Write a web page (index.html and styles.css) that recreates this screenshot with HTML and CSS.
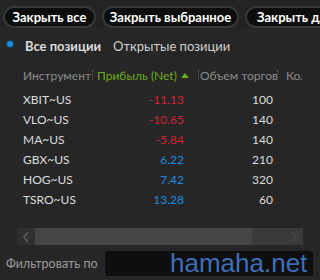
FILE: index.html
```html
<!DOCTYPE html>
<html>
<head>
<meta charset="utf-8">
<link rel="stylesheet" href="styles.css">
</head>
<body>
<div class="app">
  <div class="toolbar">
    <button class="btn b1">Закрыть все</button>
    <button class="btn b2">Закрыть выбранное</button>
    <button class="btn b3">Закрыть для</button>
  </div>
  <div class="tabs">
    <span class="radio"></span>
    <span class="tab active">Все позиции</span>
    <span class="tab">Открытые позиции</span>
  </div>
  <div class="table">
    <div class="row head">
      <span class="c1">Инструмент</span><span class="sep"></span>
      <span class="c2 sorted">Прибыль (Net) <span class="tri"></span></span><span class="sep"></span>
      <span class="c3">Объем торгов</span><span class="sep"></span>
      <span class="c4">Кол</span>
    </div>
    <div class="row"><span class="c1">XBIT~US</span><span class="c2 neg">-11.13</span><span class="c3">100</span></div>
    <div class="row"><span class="c1">VLO~US</span><span class="c2 neg">-10.65</span><span class="c3">140</span></div>
    <div class="row"><span class="c1">MA~US</span><span class="c2 neg">-5.84</span><span class="c3">140</span></div>
    <div class="row"><span class="c1">GBX~US</span><span class="c2 pos">6.22</span><span class="c3">210</span></div>
    <div class="row"><span class="c1">HOG~US</span><span class="c2 pos">7.42</span><span class="c3">320</span></div>
    <div class="row"><span class="c1">TSRO~US</span><span class="c2 pos">13.28</span><span class="c3">60</span></div>
  </div>
  <div class="scroll">
    <span class="arrow left"><svg width="8" height="12" viewBox="0 0 8 12"><path d="M6 1 L2 6 L6 11" fill="none" stroke="#555" stroke-width="2"/></svg></span>
    <span class="thumb"></span>
    <span class="track"></span>
    <span class="arrow right"><svg width="8" height="12" viewBox="0 0 8 12"><path d="M2 1 L6 6 L2 11" fill="none" stroke="#444" stroke-width="2"/></svg></span>
  </div>
  <div class="filter">
    <span class="flabel">Фильтровать по</span>
    <span class="input"></span>
    <span class="wm">hamaha.net</span>
  </div>
</div>
</body>
</html>
```
FILE: styles.css
```css
* { box-sizing: border-box; }
html, body { margin: 0; padding: 0; }
body { width: 320px; height: 280px; overflow: hidden; background: #262626; font-family: Lato, "Noto Sans", sans-serif; font-size: 12.5px; }
.app { width: 320px; height: 280px; display: flex; flex-direction: column; overflow: hidden; }
.toolbar { display: flex; gap: 6px; padding: 6px 0 0 3px; height: 28px; background: #242424; white-space: nowrap; overflow: hidden; flex: none; }
.btn { flex: none; height: 22px; border-radius: 11px; background: #0d0d0d; border: 2px solid #383838; color: #fff; font-family: inherit; font-weight: bold; font-size: 13px; padding: 0; line-height: 18px; text-align: center; }
.b1 { width: 93px; }
.b2 { width: 137px; }
.b3 { width: 90px; text-align: left; padding-left: 10px; }
.tabs { display: flex; align-items: center; height: 33px; padding: 3px 0 0 7px; background: #262626; border-bottom: 1px solid #202020; flex: none; }
.radio { width: 6px; height: 6px; border-radius: 50%; background: #1c8ad8; box-shadow: 0 0 0 1px #164060; margin: -4px 12px 0 0; }
.tab { color: #cfcfcf; font-size: 13px; margin-right: 12px; }
.tab.active { font-weight: bold; color: #dcdcdc; }
.table { padding: 2px 0 0 0; flex: none; height: 167px; font-size: 12px; }
.row { display: flex; align-items: center; height: 20px; white-space: nowrap; }
.row.head { height: 24px; margin-bottom: 2px; color: #8a8a8a; }
.c1 { width: 92px; padding-left: 23px; color: #dcdcdc; flex: none; }
.head .c1 { color: #8a8a8a; }
.c2 { width: 92px; text-align: right; flex: none; }
.head .c2 { width: 105px; text-align: left; padding-left: 4px; color: #6aaa1c; }
.head .c3 { width: 78px; text-align: left; padding-left: 1px; color: #8a8a8a; }
.head .c4 { width: 24px; padding-left: 8px; overflow: hidden; flex: none; }
.c3 { width: 89px; text-align: right; color: #dcdcdc; flex: none; }
.neg { color: #d42235; }
.pos { color: #1d8ce0; }
.sep { width: 1px; height: 10px; border-left: 1px dotted #555; flex: none; }
.tri { display: inline-block; width: 0; height: 0; border-left: 4px solid transparent; border-right: 4px solid transparent; border-bottom: 5px solid #6aaa1c; margin-left: 1px; vertical-align: 2px; }
.scroll { display: flex; height: 17px; margin: 0 17px; background: #3a3a3a; flex: none; }
.arrow { width: 18px; display: flex; align-items: center; justify-content: center; background: #303030; }
.arrow.right { background: #3a3a3a; }
.thumb { width: 217px; background: #454545; }
.track { flex: 1; }
.filter { position: relative; display: flex; align-items: center; height: 26px; margin-top: 5px; padding-left: 6px; flex: none; }
.flabel { color: #9a9a9a; font-size: 12.5px; width: 99px; }
.input { width: 208px; height: 25px; background: #0e0e0e; border-radius: 3px; }
.wm { position: absolute; left: 170px; top: 0; line-height: 26px; color: #3d6fb8; font-family: "Liberation Sans", Arial, sans-serif; font-size: 26px; }
```
